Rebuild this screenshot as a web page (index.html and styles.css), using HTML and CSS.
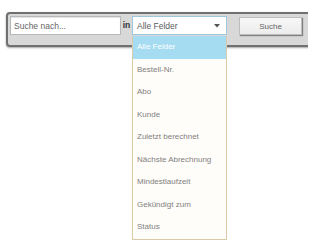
FILE: index.html
```html
<!DOCTYPE html>
<html>
<head>
<meta charset="utf-8">
<link rel="stylesheet" href="styles.css">
</head>
<body>
<div class="page">
  <div class="panel">
    <div class="field search">Suche nach...</div>
    <span class="in">in</span>
    <div class="select-wrap">
      <div class="field select">
        <span>Alle Felder</span>
        <svg class="arrow" width="6" height="4" viewBox="0 0 6 4"><path d="M0 0 L6 0 L3 3.5 Z" fill="#555"/></svg>
      </div>
      <ul class="dropdown">
        <li class="active">Alle Felder</li>
        <li>Bestell-Nr.</li>
        <li>Abo</li>
        <li>Kunde</li>
        <li>Zuletzt berechnet</li>
        <li>Nächste Abrechnung</li>
        <li>Mindestlaufzeit</li>
        <li>Gekündigt zum</li>
        <li>Status</li>
      </ul>
    </div>
    <div class="button">Suche</div>
  </div>
</div>
</body>
</html>
```
FILE: styles.css
```css
html, body {
  margin: 0;
  padding: 0;
  background: #ffffff;
  font-family: "Liberation Sans", Arial, sans-serif;
  overflow: hidden;
}
.page {
  width: 308px;
  height: 244px;
  padding: 12px 0 0 6px;
  box-sizing: border-box;
  overflow: hidden;
}
.panel {
  width: 320px;
  height: 35px;
  box-sizing: border-box;
  border: 2px solid #707070;
  border-radius: 4px;
  background: #d8d8d8;
  box-shadow: 0 1px 2px rgba(0,0,0,0.35);
  display: flex;
  align-items: flex-start;
  padding: 2px 0 0 2px;
}
.field {
  height: 19px;
  box-sizing: border-box;
  background: #ffffff;
  font-size: 8.5px;
  color: #666;
  display: flex;
  align-items: center;
}
.search {
  width: 111px;
  border: 1px solid #b8b8b8;
  box-shadow: inset 0 1px 1px rgba(0,0,0,0.12);
  padding-left: 3px;
}
.in {
  font-size: 8.5px;
  font-weight: bold;
  color: #333;
  width: 11px;
  text-align: center;
  line-height: 19px;
}
.select-wrap {
  position: relative;
  width: 95px;
}
.select {
  width: 95px;
  border: 1px solid #9ec7df;
  padding-left: 4px;
  padding-right: 6px;
  justify-content: space-between;
  color: #5a5a5a;
}
.arrow {
  display: block;
}
.dropdown {
  position: absolute;
  left: 0;
  top: 20px;
  width: 95px;
  margin: 0;
  padding: 0;
  list-style: none;
  box-sizing: border-box;
  border: 1px solid #d9cba8;
  border-top: none;
  background: #fffdf9;
  z-index: 2;
}
.dropdown li {
  height: 22.5px;
  line-height: 22.5px;
  padding-left: 4px;
  font-size: 8px;
  color: #808080;
  white-space: nowrap;
}
.dropdown li.active {
  background: #a6dcf2;
  color: #ffffff;
}
.button {
  margin-left: 12px;
  margin-top: 1px;
  width: 63px;
  height: 18px;
  box-sizing: border-box;
  border: 1px solid #bdbdbd;
  background: linear-gradient(#f7f7f7, #ececec);
  box-shadow: 1px 1px 1px rgba(0,0,0,0.4);
  font-size: 8px;
  color: #666;
  display: flex;
  align-items: center;
  justify-content: center;
}
```
